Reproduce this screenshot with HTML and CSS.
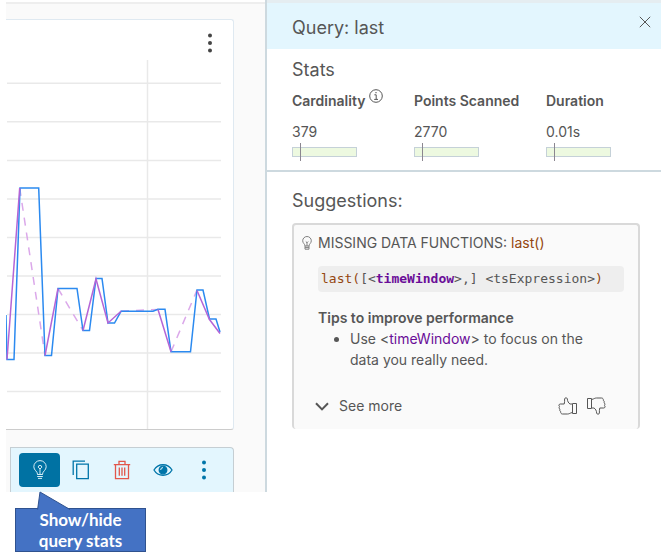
FILE: index.html
```html
<!DOCTYPE html>
<html lang="en">
<head>
<meta charset="utf-8">
<title>Query: last</title>
<link rel="stylesheet" href="styles.css">
</head>
<body>
<main class="app">
  <section class="workspace">
    <div class="chart-card">
      <header class="chart-head">
        <button class="plain" type="button" aria-label="Chart menu">
          <svg class="dots" width="6" height="20" viewBox="0 0 6 20"><circle cx="3" cy="2.6" r="2"/><circle cx="3" cy="10" r="2"/><circle cx="3" cy="17.5" r="2"/></svg>
        </button>
      </header>
      <svg class="chart" viewBox="6 60 215 369" preserveAspectRatio="none" role="img" aria-label="Time series chart">
        <path class="grid-line" d="M7 83.2H221M7 121.8H221M7 160.4H221M7 199H221M7 237.5H221M7 276H221M7 314.5H221M7 353H221M7 391.6H221M147.5 60V429"/>
        <path class="raw-gap" d="M19.7 188L45 355.5M58 288.5L83 330.5M121 311L158 309.5M171 351.8L197 290"/>
        <path class="last" d="M6 315L7 359.5H14L20 188H38.7L45 355.5H51.5L58 288.5H77L83 330.5H89.5L96 278.5H102L108 323H114.5L121 311.3H153L158 309.3H165L171 351.8H190.5L197 290H203L209.5 319H216L220 332"/>
        <path class="raw" d="M7 359.5L19.7 188M45 355.5L58 288.5M83 330.5L96 279L108 323L121 311.3M158 309.5L171 351.8M197 290.5L209.5 319.5L220 333.5"/>
      </svg>
    </div>
    <div class="query-row">
      <button class="tool active" type="button" aria-label="Show/hide query stats">
        <svg width="16" height="20" viewBox="0 0 16 20"><path d="M5.5 14.2C5.5 11.2 1.8 10.3 1.8 6.8a6.2 6.2 0 0 1 12.4 0c0 3.5-3.7 4.4-3.7 7.4M5.2 14.5h5.6M5.2 16.5h5.6M6 18.4h4M8 14V8.5M6.2 7.2a1.8 1.8 0 1 1 3.6 0L8 9z"/></svg>
      </button>
      <button class="tool" type="button" aria-label="Copy">
        <svg width="18" height="20" viewBox="0 0 18 20"><path d="M1.2 15V1.2H13M4.7 4.2h11.6v14.4H4.7z"/></svg>
      </button>
      <button class="tool danger" type="button" aria-label="Delete">
        <svg width="18" height="20" viewBox="0 0 18 20"><path d="M.8 4.6h16.4M2.5 4.6v14h13v-14M6 4.2V1.4h6v2.8M6.3 7.5v8.2M9 7.5v8.2M11.7 7.5v8.2"/></svg>
      </button>
      <button class="tool" type="button" aria-label="Toggle visibility">
        <svg width="20" height="14" viewBox="0 0 20 14"><path d="M1 7C5 0 15 0 19 7C15 14 5 14 1 7Z"/><circle class="fill" cx="10" cy="7" r="3.8"/><path class="glint" d="M7.7 7A2.3 2.3 0 0 1 10 4.6"/></svg>
      </button>
      <button class="tool" type="button" aria-label="More actions">
        <svg class="dots" width="6" height="20" viewBox="0 0 6 20"><circle cx="3" cy="2.6" r="2"/><circle cx="3" cy="10" r="2"/><circle cx="3" cy="17.5" r="2"/></svg>
      </button>
    </div>
  </section>

  <aside class="panel">
    <header class="panel-head">
      <h1>Query: last</h1>
      <button class="plain close" type="button" aria-label="Close">
        <svg width="12" height="12" viewBox="0 0 12 12"><path d="M.8.8l10.4 10.4M11.2.8L.8 11.2"/></svg>
      </button>
    </header>
    <section class="stats">
      <h2>Stats</h2>
      <dl class="stat-list">
        <div class="stat">
          <dt>Cardinality
            <svg class="info" width="14" height="14" viewBox="0 0 14 14"><circle cx="7" cy="7" r="6.3"/><path d="M5.4 5.8H7.2V10.3M5.2 10.4h3.8M6.3 3.7h1.4"/></svg>
          </dt>
          <dd>379</dd>
          <dd class="meter"></dd>
        </div>
        <div class="stat">
          <dt>Points Scanned</dt>
          <dd>2770</dd>
          <dd class="meter"></dd>
        </div>
        <div class="stat">
          <dt>Duration</dt>
          <dd>0.01s</dd>
          <dd class="meter"></dd>
        </div>
      </dl>
    </section>
    <section class="suggestions">
      <h2>Suggestions:</h2>
      <article class="tip-card">
        <h3><svg width="10" height="14" viewBox="0 0 10 14"><path d="M3 10C3 8 .7 7.200.7 4.800a4.300 4.300 0 0 1 8.600 0C9.300 7.200 7 8 7 10M3 10v3.200h4V10zM3 11.600h4M5 10V6M3.800 5.500L5 6.700l1.200-1.200"/></svg>MISSING DATA FUNCTIONS: <span class="fn">last()</span></h3>
        <div class="tip-body">
          <code><span class="fn">last(</span>[&lt;<span class="arg">timeWindow</span>&gt;,] &lt;tsExpression&gt;<span class="fn">)</span></code>
          <h4>Tips to improve performance</h4>
          <ul><li>Use &lt;<span class="param">timeWindow</span>&gt; to focus on the data you really need.</li></ul>
        </div>
        <footer class="tip-foot">
          <button class="plain more" type="button"><svg width="14" height="9" viewBox="0 0 14 9"><path d="M1 1.200L7 7.400L13 1.200"/></svg>See more</button>
          <button class="plain vote" type="button" aria-label="Helpful">
            <svg width="20" height="18" viewBox="0 0 20 18"><path d="M14 7H12C10.500 6 9.500 4.500 9.300 1.800C9 .3 6.800.5 6.600 2C6.500 4 6.800 5.500 6.200 7H2.200C.8 7 .5 9 1.500 9.600C.8 10.500 1 11.700 2 12.200C1.500 13.200 1.800 14.200 2.700 14.600C2.500 16 3.200 17 4.500 17H9.500C11.500 17 12 16 14 15.600M14.500 6.500h4v10h-4z"/></svg>
          </button>
          <button class="plain vote" type="button" aria-label="Not helpful">
            <svg width="20" height="18" viewBox="0 0 20 18"><path d="M6 11H8C9.500 12 10.500 13.500 10.700 16.200C11 17.700 13.200 17.500 13.400 16C13.500 14 13.200 12.500 13.800 11H17.800C19.200 11 19.500 9 18.500 8.400C19.200 7.500 19 6.300 18 5.800C18.500 4.800 18.200 3.800 17.300 3.400C17.500 2 16.800 1 15.500 1H10.500C8.500 1 8 2 6 2.400M1.500 1.500h4v10h-4z"/></svg>
          </button>
        </footer>
      </article>
    </section>
  </aside>
</main>
<div class="callout">
  <svg class="pointer" width="34" height="19" viewBox="0 0 34 19"><path d="M.6 18.500L3 1L33 18.500"/></svg>
  Show/hide<br>query stats
</div>
</body>
</html>
```
FILE: styles.css
```css
* { box-sizing: border-box; }
body, h1, h2, h3, h4, dl, dd, ul { margin: 0; }
body {
  background: #fff;
  color: #565656;
  font: 14px/20px "Inter", sans-serif;
}
h1, h2 { font-size: 18px; line-height: 24px; font-weight: 400; }
h3 { font-size: 14px; font-weight: 400; }
h4 { font-size: 14px; font-weight: 600; }
svg { display: block; fill: none; stroke: currentColor; }
button { font: inherit; color: inherit; cursor: pointer; }
.plain { padding: 0; border: 0; background: none; }
.dots { fill: currentColor; stroke: none; }

.app {
  display: grid;
  grid-template-columns: minmax(0, 259fr) minmax(0, 396fr);
  padding-left: 6px;
}
.workspace {
  display: flex;
  flex-direction: column;
  gap: 17px;
  padding: 15px 31px 0 0;
  border-top: 2px solid #eee;
  margin-top: 2px;
  background: #fafafa;
}
.chart-card {
  border: 1px solid #dfe9f1;
  border-bottom-color: #ccc;
  border-left: 0;
  border-radius: 0 3px 3px 0;
  background: #fff;
  padding-right: 12px;
}
.chart-head {
  display: flex;
  justify-content: flex-end;
  padding: 6px 8px 0 0;
  height: 40px;
  color: #444;
}
.chart { width: 100%; height: 369px; }
.chart path { vector-effect: non-scaling-stroke; stroke-width: 1.500px; }
.chart .grid-line { stroke: #e9e9e9; }
.chart .last { stroke: #2b8af0; }
.chart .raw { stroke: #b565d6; }
.chart .raw-gap { stroke: #dba8ea; stroke-dasharray: 8 7; }

.query-row {
  display: flex;
  align-items: center;
  margin-left: 4px;
  padding-left: 8px;
  height: 45px;
  border: 1px solid #c5ced3;
  border-bottom: 0;
  border-radius: 0 4px 0 0;
  background: #e3f6fe;
  color: #0075a9;
}
.tool {
  display: flex;
  justify-content: center;
  align-items: center;
  width: 41px;
  height: 34px;
  padding: 0;
  border: 0;
  background: none;
  stroke-width: 1.300px;
}
.active {
  border-radius: 4px;
  background: #0072a3;
  color: #d7edf5;
  stroke-width: 1px;
}
.danger { color: #e2564b; }
.fill { fill: currentColor; }
.glint { stroke: #e3f6fe; stroke-width: 1px; }

.panel {
  border-left: 2px solid #cdd9df;
}
.panel-head {
  display: flex;
  justify-content: space-between;
  align-items: center;
  padding: 4px 10px 0 25px;
  height: 49px;
  border-top: 3px solid #e5edf1;
  background: #e3f6fe;
}
.close { padding-bottom: 12px; }
.stats {
  padding: 9px 24px 9px 25px;
  border-bottom: 2px solid #cdd9df;
}
.stat-list {
  display: grid;
  grid-template-columns: 122fr 132fr 91fr;
  margin-top: 9px;
}
.stat { line-height: 20px; }
dt { display: flex; font-weight: 600; white-space: nowrap; }
dd { margin-top: 11px; }
.info { margin: -2px 0 0 4px; }
.meter {
  width: 65px;
  height: 18px;
  margin-top: 1px;
  background:
    linear-gradient(#8b8790, #8b8790) 8px 0 / 1px 18px no-repeat,
    linear-gradient(#edf9e0, #edf9e0) 1px 5px / 63px 8px no-repeat,
    linear-gradient(#c5d1d8, #c5d1d8) 0 4px / 65px 10px no-repeat;
}
.suggestions { padding: 17px 21px 0 25px; }
.tip-card {
  margin-top: 10px;
  padding: 8px 14px 13px 8px;
  border: 2px solid #d9d9d9;
  border-bottom: 0;
  border-radius: 4px;
  background: #fafafa;
}
.tip-card h3 { display: flex; align-items: center; white-space: pre; }
.tip-card h3 svg { margin-right: 6px; color: #808080; }
.tip-body { padding-left: 16px; }
.fn { color: #944710; }
.arg { color: #6a0d98; font-weight: 700; }
.param { color: #6a0d98; }
code {
  display: block;
  margin: 13px 0 16px;
  padding: 3px;
  border-radius: 4px;
  background: #eee;
  font: 13px/20px "DejaVu Sans Mono", monospace;
  white-space: nowrap;
}
ul { padding: 0 24px 0 32px; line-height: 21px; }
.tip-foot {
  display: flex;
  align-items: center;
  gap: 8px;
  margin-top: 26px;
  padding: 0 18px 0 13px;
}
.more {
  display: flex;
  align-items: center;
  gap: 10px;
  margin-right: auto;
  stroke-width: 2px;
}

.callout {
  position: relative;
  width: 131px;
  margin: 16px 0 0 15px;
  border: 1px solid #2f528f;
  background: #4472c4;
  color: #fff;
  font: 700 17px/21px "Lato", sans-serif;
  text-align: center;
}
.pointer {
  position: absolute;
  left: 21px;
  top: -18px;
  fill: #4472c4;
  stroke: #2f528f;
}
```
